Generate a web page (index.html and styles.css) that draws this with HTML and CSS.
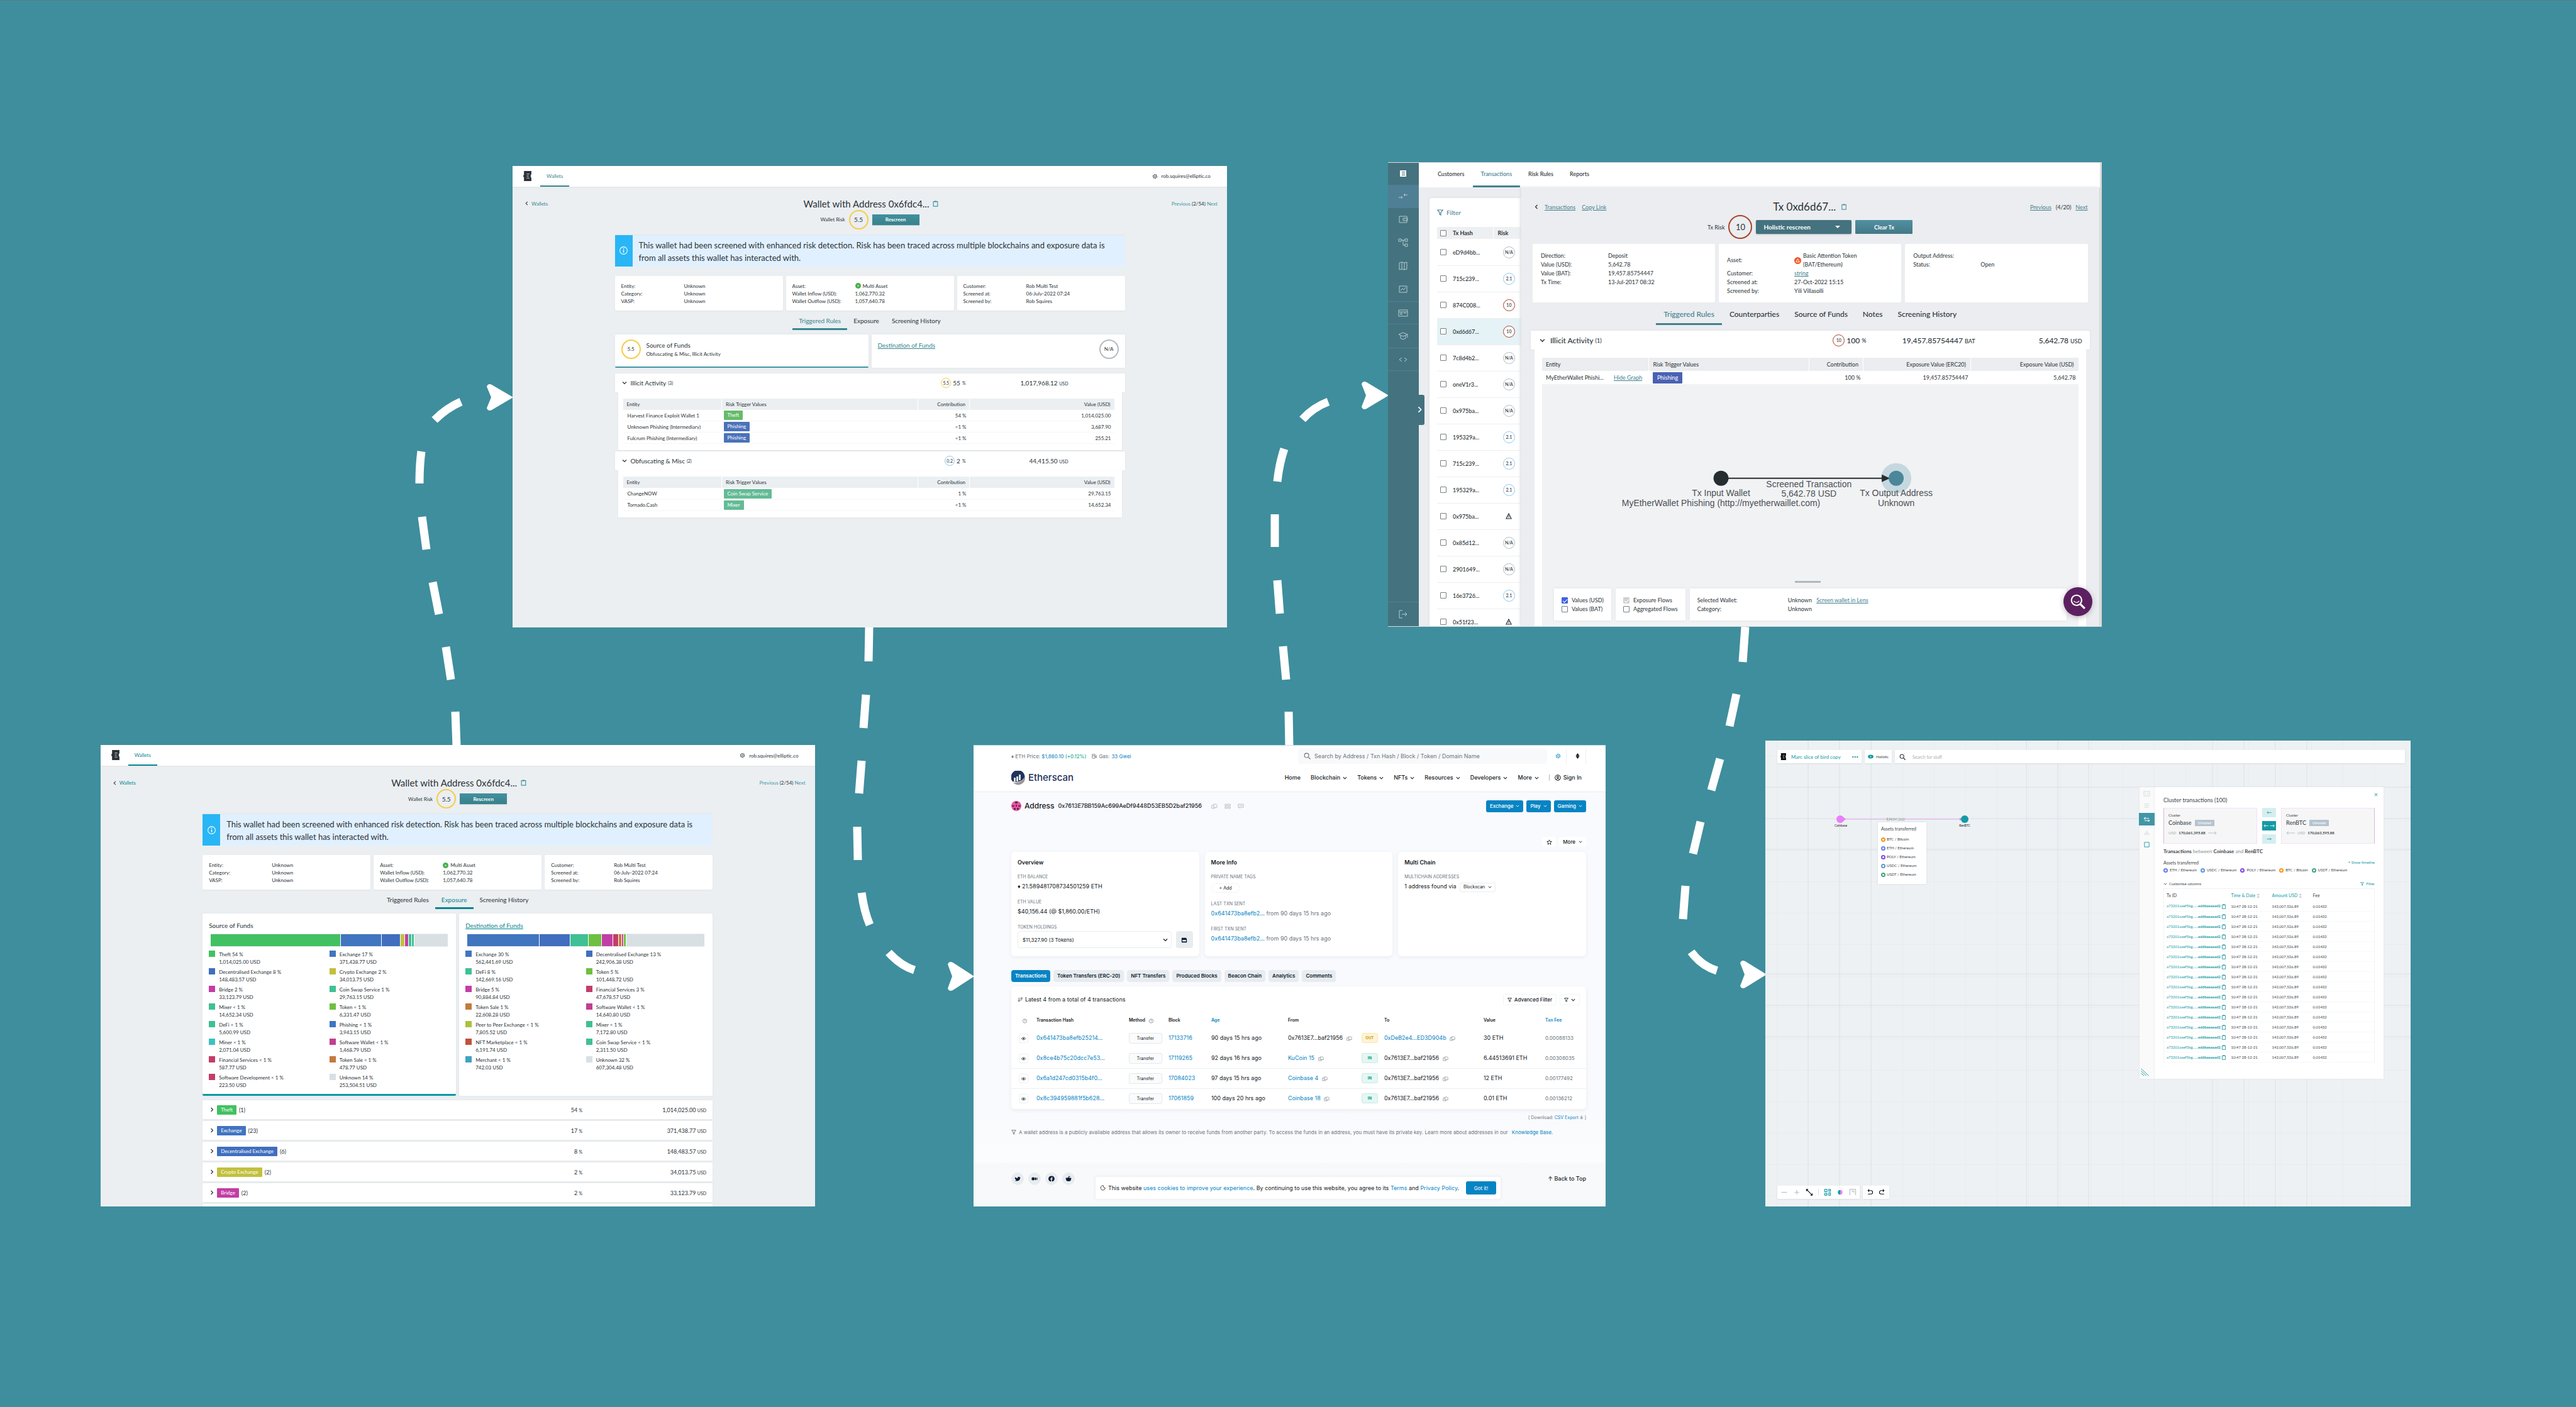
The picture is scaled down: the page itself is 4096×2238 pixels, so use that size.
FILE: index.html
```html
<!DOCTYPE html>
<html lang="en">
<head>
<meta charset="utf-8">
<title>Investigation workflow</title>
<link rel="stylesheet" href="styles.css">
</head>
<body>
<svg class="defs" aria-hidden="true">
  <symbol id="i-clip" viewBox="0 0 10 12"><path d="M1 2h8v9H1z" fill="none" stroke="currentColor" stroke-width="1.400"/><path d="M3 .5h4v2.500H3z" fill="currentColor"/></symbol>
  <symbol id="i-copy" viewBox="0 0 12 10"><path d="M4.500 1h5l1.500 1.500V7H4.500zM4.500 3H1v6h6V7" fill="none" stroke="currentColor" stroke-width="1"/></symbol>
  <symbol id="i-down" viewBox="0 0 8 8"><path d="M1 2.500l3 3 3-3" fill="none" stroke="currentColor" stroke-width="1.200"/></symbol>
  <symbol id="i-right" viewBox="0 0 8 8"><path d="M2.500 1l3 3-3 3" fill="none" stroke="currentColor" stroke-width="1.200"/></symbol>
  <symbol id="i-left" viewBox="0 0 8 8"><path d="M5.500 1l-3 3 3 3" fill="none" stroke="currentColor" stroke-width="1.200"/></symbol>
  <symbol id="i-e" viewBox="0 0 12 15"><path d="M1 0h11v5l-1 1v3l1 1v5H1V9H0V6h1z" fill="currentColor"/><path d="M5 4.500h4M5 7.500h3M5 10.500h4" stroke="#fff" stroke-width=".8"/></symbol>
  <symbol id="i-filter" viewBox="0 0 10 10"><path d="M.8 1h8.400L6 5v4L4 8V5z" fill="none" stroke="currentColor" stroke-width="1.200"/></symbol>
  <symbol id="i-search" viewBox="0 0 12 12"><circle cx="5" cy="5" r="3.800" fill="none" stroke="currentColor" stroke-width="1.200"/><path d="M8 8l3.500 3.500" stroke="currentColor" stroke-width="1.400"/></symbol>
  <symbol id="i-warn" viewBox="0 0 10 10"><path d="M5 1l4 8H1z" fill="none" stroke="currentColor" stroke-width="1.200"/><path d="M5 4v2.500M5 7.300v1" stroke="currentColor" stroke-width="1"/></symbol>
  <symbol id="i-gear" viewBox="0 0 12 12"><circle cx="6" cy="6" r="4" fill="none" stroke="currentColor" stroke-width="1.600" stroke-dasharray="3 1"/><circle cx="6" cy="6" r="1.500" fill="none" stroke="currentColor"/></symbol>
  <symbol id="i-help" viewBox="0 0 10 10"><circle cx="5" cy="5" r="4" fill="none" stroke="currentColor"/><path d="M3.800 4c0-1.600 2.500-1.600 2.500 0 0 .8-1.300.8-1.300 1.800M5 6.800v.9" fill="none" stroke="currentColor"/></symbol>
  <symbol id="i-eye" viewBox="0 0 10 10"><path d="M.8 5C3 1.800 7 1.800 9.200 5 7 8.200 3 8.200.8 5z" fill="none" stroke="currentColor"/><circle cx="5" cy="5" r="1.500" fill="currentColor"/></symbol>
</svg>

<main class="board">
  <svg class="flow" viewBox="0 0 4096 2238" aria-hidden="true">
    <g fill="none" stroke="#fff" stroke-width="13">
      <path d="M726 1187L724 1132M717 1081L709 1029M698 977L688 926M678 874L671 822M667 769Q667 740 670 718M691 668Q710 649 733 639"/>
      <path d="M1382 998L1381 1052M1377 1105L1373 1158M1370 1210L1366 1262M1363 1315L1364 1368M1370 1420Q1374 1450 1383 1471M1413 1515Q1432 1536 1454 1543"/>
      <path d="M2050 1187L2049 1132M2045 1081L2040 1028M2035 976L2031 923M2027 870L2027 818M2031 766Q2034 738 2042 714M2071 667Q2088 648 2112 639"/>
      <path d="M2775 997L2771 1053M2761 1104L2750 1155M2735 1207L2721 1257M2704 1307L2692 1358M2680 1409L2676 1462M2689 1514Q2705 1536 2730 1544"/>
    </g>
    <g fill="#fff">
      <path d="M816 632L782 652q-6 3-8-3l7-17-7-17q2-6 8-3z"/>
      <path d="M1549 1553L1515 1575q-6 3-8-3l7-19-7-19q2-6 8-3z"/>
      <path d="M2208 629L2173 650q-6 3-8-3l7-18-7-18q2-6 8-3z"/>
      <path d="M2809 1550L2775 1571q-6 3-8-3l7-18-7-18q2-6 8-3z"/>
    </g>
  </svg>

  <!-- Wallet: triggered rules -->
  <section class="shot shot-rules wallet">
    <header class="w-nav">
      <svg class="w-logo"><use href="#i-e"/></svg>
      <a class="w-navlink" href="#">Wallets</a>
      <span class="w-user"><svg><use href="#i-gear"/></svg>rob.squires@elliptic.co</span>
    </header>
    <div class="w-title">
      <span class="w-back"><svg><use href="#i-left"/></svg><a href="#">Wallets</a></span>
      <h1>Wallet with Address 0x6fdc4... <svg><use href="#i-clip"/></svg></h1>
      <span class="w-pager"><a href="#">Previous</a> (2/54) <a href="#">Next</a></span>
    </div>
    <div class="w-risk"><span>Wallet Risk</span><span class="ring yellow big">5.5</span><button class="w-btn">Rescreen</button></div>
    <div class="w-body">
      <div class="w-banner"><span class="w-info"><svg viewBox="0 0 14 14"><circle cx="7" cy="7" r="5.500" fill="none" stroke="#fff"/><path d="M7 6v4M7 3.500v1.300" stroke="#fff" stroke-width="1.400"/></svg></span><p>This wallet had been screened with enhanced risk detection. Risk has been traced across multiple blockchains and exposure data is from all assets this wallet has interacted with.</p></div>
      <div class="w-cards">
        <dl><dt>Entity:</dt><dd>Unknown</dd><dt>Category:</dt><dd>Unknown</dd><dt>VASP:</dt><dd>Unknown</dd></dl>
        <dl><dt>Asset:</dt><dd><i class="coin"></i>Multi Asset</dd><dt>Wallet Inflow (USD):</dt><dd>1,062,770.32</dd><dt>Wallet Outflow (USD):</dt><dd>1,057,640.78</dd></dl>
        <dl><dt>Customer:</dt><dd>Rob Multi Test</dd><dt>Screened at:</dt><dd>06-July-2022 07:24</dd><dt>Screened by:</dt><dd>Rob Squires</dd></dl>
      </div>
      <nav class="w-tabs"><a class="on" href="#">Triggered Rules</a><a href="#">Exposure</a><a href="#">Screening History</a></nav>
      <div class="w-funds">
        <div class="w-fund on"><span class="ring yellow big">5.5</span><div class="w-fundtext"><h2>Source of Funds</h2><p>Obfuscating &amp; Misc, Illicit Activity</p></div></div>
        <div class="w-fund"><h2><a href="#">Destination of Funds</a></h2><span class="ring grey big">N/A</span></div>
      </div>
      <div class="w-sec">
        <div class="w-sechead"><h3><svg><use href="#i-down"/></svg>Illicit Activity <small>(3)</small></h3><span class="pct"><span class="ring yellow small">5.5</span>55 <small>%</small></span><span>1,017,968.12 <small>USD</small></span></div>
        <div class="w-secbody">
          <table class="w-table">
            <thead><tr><th>Entity</th><th>Risk Trigger Values</th><th>Contribution</th><th>Value (USD)</th></tr></thead>
            <tbody>
              <tr><td>Harvest Finance Exploit Wallet 1</td><td><span class="tag green">Theft</span></td><td>54 %</td><td>1,014,025.00</td></tr>
              <tr><td>Unknown Phishing (Intermediary)</td><td><span class="tag blue">Phishing</span></td><td>&lt;1 %</td><td>3,687.90</td></tr>
              <tr><td>Fulcrum Phishing (Intermediary)</td><td><span class="tag blue">Phishing</span></td><td>&lt;1 %</td><td>255.21</td></tr>
            </tbody>
          </table>
        </div>
      </div>
      <div class="w-sec">
        <div class="w-sechead"><h3><svg><use href="#i-down"/></svg>Obfuscating &amp; Misc <small>(2)</small></h3><span class="pct"><span class="ring sky small">0.2</span>2 <small>%</small></span><span>44,415.50 <small>USD</small></span></div>
        <div class="w-secbody">
          <table class="w-table">
            <thead><tr><th>Entity</th><th>Risk Trigger Values</th><th>Contribution</th><th>Value (USD)</th></tr></thead>
            <tbody>
              <tr><td>ChangeNOW</td><td><span class="tag mint">Coin Swap Service</span></td><td>1 %</td><td>29,763.15</td></tr>
              <tr><td>Tornado.Cash</td><td><span class="tag mint">Mixer</span></td><td>&lt;1 %</td><td>14,652.34</td></tr>
            </tbody>
          </table>
        </div>
      </div>
    </div>
  </section>

  <!-- Wallet: exposure -->
  <section class="shot shot-exposure wallet teal">
    <header class="w-nav">
      <svg class="w-logo"><use href="#i-e"/></svg>
      <a class="w-navlink" href="#">Wallets</a>
      <span class="w-user"><svg><use href="#i-gear"/></svg>rob.squires@elliptic.co</span>
    </header>
    <div class="w-title">
      <span class="w-back"><svg><use href="#i-left"/></svg><a href="#">Wallets</a></span>
      <h1>Wallet with Address 0x6fdc4... <svg><use href="#i-clip"/></svg></h1>
      <span class="w-pager"><a href="#">Previous</a> (2/54) <a href="#">Next</a></span>
    </div>
    <div class="w-risk"><span>Wallet Risk</span><span class="ring yellow big">5.5</span><button class="w-btn">Rescreen</button></div>
    <div class="w-body">
      <div class="w-banner"><span class="w-info"><svg viewBox="0 0 14 14"><circle cx="7" cy="7" r="5.500" fill="none" stroke="#fff"/><path d="M7 6v4M7 3.500v1.300" stroke="#fff" stroke-width="1.400"/></svg></span><p>This wallet had been screened with enhanced risk detection. Risk has been traced across multiple blockchains and exposure data is from all assets this wallet has interacted with.</p></div>
      <div class="w-cards">
        <dl><dt>Entity:</dt><dd>Unknown</dd><dt>Category:</dt><dd>Unknown</dd><dt>VASP:</dt><dd>Unknown</dd></dl>
        <dl><dt>Asset:</dt><dd><i class="coin"></i>Multi Asset</dd><dt>Wallet Inflow (USD):</dt><dd>1,062,770.32</dd><dt>Wallet Outflow (USD):</dt><dd>1,057,640.78</dd></dl>
        <dl><dt>Customer:</dt><dd>Rob Multi Test</dd><dt>Screened at:</dt><dd>06-July-2022 07:24</dd><dt>Screened by:</dt><dd>Rob Squires</dd></dl>
      </div>
      <nav class="w-tabs"><a href="#">Triggered Rules</a><a class="on" href="#">Exposure</a><a href="#">Screening History</a></nav>
      <div class="w-expos">
        <div class="w-expo on">
          <h2>Source of Funds</h2>
          <div class="bar"><i style="flex-grow:380;background:#42c162"></i><i style="flex-grow:119;background:#4075c0"></i><i style="flex-grow:52;background:#416ebe"></i><i style="flex-grow:11;background:#c2c03d"></i><i style="flex-grow:10;background:#c23ea5"></i><i style="flex-grow:8;background:#40c094"></i><i style="flex-grow:5;background:#40c094"></i><i style="flex-grow:98;background:#d9e0e4"></i></div>
          <ul class="legend">
            <li style="--c:#42c162">Theft 54 %<br>1,014,025.00 USD</li><li style="--c:#4075c0">Exchange 17 %<br>371,438.77 USD</li>
            <li style="--c:#416ebe">Decentralised Exchange 8 %<br>148,483.57 USD</li><li style="--c:#c2c03d">Crypto Exchange 2 %<br>34,013.75 USD</li>
            <li style="--c:#c23ea5">Bridge 2 %<br>33,123.79 USD</li><li style="--c:#40c094">Coin Swap Service 1 %<br>29,763.15 USD</li>
            <li style="--c:#40c094">Mixer &lt; 1 %<br>14,652.34 USD</li><li style="--c:#6dc040">Token &lt; 1 %<br>6,331.47 USD</li>
            <li style="--c:#40c094">DeFi &lt; 1 %<br>5,600.99 USD</li><li style="--c:#4075c0">Phishing &lt; 1 %<br>3,943.15 USD</li>
            <li style="--c:#40c0c0">Miner &lt; 1 %<br>2,071.04 USD</li><li style="--c:#c23e90">Software Wallet &lt; 1 %<br>1,468.79 USD</li>
            <li style="--c:#c23e68">Financial Services &lt; 1 %<br>587.77 USD</li><li style="--c:#c27a3e">Token Sale &lt; 1 %<br>478.77 USD</li>
            <li style="--c:#c23e68">Software Development &lt; 1 %<br>223.50 USD</li><li style="--c:#d9e0e4">Unknown 14 %<br>253,504.51 USD</li>
          </ul>
        </div>
        <div class="w-expo">
          <h2><a href="#">Destination of Funds</a></h2>
          <div class="bar"><i style="flex-grow:213;background:#4075c0"></i><i style="flex-grow:90;background:#416ebe"></i><i style="flex-grow:52;background:#40c094"></i><i style="flex-grow:36;background:#6dc040"></i><i style="flex-grow:32;background:#c23ea5"></i><i style="flex-grow:16;background:#c23e68"></i><i style="flex-grow:7;background:#c27a3e"></i><i style="flex-grow:4;background:#c23e90"></i><i style="flex-grow:5;background:#6dc040"></i><i style="flex-grow:232;background:#d9e0e4"></i></div>
          <ul class="legend">
            <li style="--c:#4075c0">Exchange 30 %<br>562,441.69 USD</li><li style="--c:#416ebe">Decentralised Exchange 13 %<br>242,906.38 USD</li>
            <li style="--c:#40c094">DeFi 8 %<br>142,669.16 USD</li><li style="--c:#6dc040">Token 5 %<br>101,448.72 USD</li>
            <li style="--c:#c23ea5">Bridge 5 %<br>90,884.84 USD</li><li style="--c:#c23e68">Financial Services 3 %<br>47,678.57 USD</li>
            <li style="--c:#c27a3e">Token Sale 1 %<br>22,608.28 USD</li><li style="--c:#c23e90">Software Wallet &lt; 1 %<br>14,640.80 USD</li>
            <li style="--c:#adc03e">Peer to Peer Exchange &lt; 1 %<br>7,805.52 USD</li><li style="--c:#40c094">Mixer &lt; 1 %<br>7,172.80 USD</li>
            <li style="--c:#c2503e">NFT Marketplace &lt; 1 %<br>6,191.74 USD</li><li style="--c:#40c094">Coin Swap Service &lt; 1 %<br>2,311.50 USD</li>
            <li style="--c:#40a2c0">Merchant &lt; 1 %<br>742.03 USD</li><li style="--c:#d9e0e4">Unknown 32 %<br>607,304.48 USD</li>
          </ul>
        </div>
      </div>
      <div class="w-rows">
        <div class="w-row"><h3><svg><use href="#i-right"/></svg><span class="tag" style="background:#42c162">Theft</span>(1)</h3><span>54 <small>%</small></span><span>1,014,025.00 <small>USD</small></span></div>
        <div class="w-row"><h3><svg><use href="#i-right"/></svg><span class="tag" style="background:#4075c0">Exchange</span>(23)</h3><span>17 <small>%</small></span><span>371,438.77 <small>USD</small></span></div>
        <div class="w-row"><h3><svg><use href="#i-right"/></svg><span class="tag" style="background:#416ebe">Decentralised Exchange</span>(6)</h3><span>8 <small>%</small></span><span>148,483.57 <small>USD</small></span></div>
        <div class="w-row"><h3><svg><use href="#i-right"/></svg><span class="tag" style="background:#c2c03d">Crypto Exchange</span>(2)</h3><span>2 <small>%</small></span><span>34,013.75 <small>USD</small></span></div>
        <div class="w-row"><h3><svg><use href="#i-right"/></svg><span class="tag" style="background:#c23ea5">Bridge</span>(2)</h3><span>2 <small>%</small></span><span>33,123.79 <small>USD</small></span></div>
        <div class="w-row"></div>
      </div>
    </div>
  </section>

  <!-- Transaction screening -->
  <section class="shot shot-tx">
    <aside class="t-side">
      <a class="t-logo" href="#" aria-label="Home"><svg viewBox="0 0 12 12"><path d="M1 1h10v10H1z" fill="#fff"/><path d="M4 3.500h5M4 6h5M4 8.500h5" stroke="#44727f"/></svg></a>
      <a class="on" href="#" aria-label="Transactions"><svg viewBox="0 0 16 16"><path d="M1 10h5M5 8l2 2-2 2M15 6h-5M11 4L9 6l2 2"/></svg></a>
      <a href="#" aria-label="Wallets"><svg viewBox="0 0 16 16"><path d="M2 3h12v10H2zM8 6h7v4H8zM10 8h1"/></svg></a>
      <a href="#" aria-label="Flows"><svg viewBox="0 0 16 16"><path d="M1 2h4v4H1zM11 2h4v4h-4zM11 10h4v4h-4zM5 4h6M8 4v8h3"/></svg></a>
      <a href="#" aria-label="Map"><svg viewBox="0 0 16 16"><path d="M2 3l4-1 4 1 4-1v11l-4 1-4-1-4 1zM6 2v11M10 3v11"/></svg></a>
      <a href="#" aria-label="Reports"><svg viewBox="0 0 16 16"><path d="M2 3h12v10H2zM4 10l3-3 2 2 3-4"/></svg></a>
      <a class="rule" href="#" aria-label="Cases"><svg viewBox="0 0 16 16"><path d="M1 3h14v10H1zM1 6h14M3 8h4M9 8h4M3 10h4"/></svg></a>
      <a href="#" aria-label="Learning"><svg viewBox="0 0 16 16"><path d="M1 6l7-3 7 3-7 3zM4 8v4l4 2 4-2V8M15 6v5"/></svg></a>
      <a class="rule" href="#" aria-label="API"><svg viewBox="0 0 16 16"><path d="M6 5L2 8l4 3M10 5l4 3-4 3"/></svg></a>
      <a class="t-out rule" href="#" aria-label="Log out"><svg viewBox="0 0 16 16"><path d="M7 2H2v12h5M6 8h8M11 5l3 3-3 3"/></svg></a>
      <button class="t-toggle" aria-label="Expand menu"><svg><use href="#i-right"/></svg></button>
    </aside>
    <div class="t-page">
      <nav class="t-nav"><a href="#">Customers</a><a class="on" href="#">Transactions</a><a href="#">Risk Rules</a><a href="#">Reports</a></nav>
      <div class="t-cols">
        <div class="t-list">
          <button class="t-filter"><svg><use href="#i-filter"/></svg>Filter</button>
          <table>
            <thead><tr><th><input type="checkbox" aria-label="Select all"></th><th>Tx Hash</th><th>Risk</th></tr></thead>
            <tbody>
              <tr><td><input type="checkbox" aria-label="Select row 1"></td><td>eD9d4bb...</td><td><span class="ring grey mid">N/A</span></td></tr>
              <tr><td><input type="checkbox" aria-label="Select row 2"></td><td>715c239...</td><td><span class="ring sky mid">2.1</span></td></tr>
              <tr><td><input type="checkbox" aria-label="Select row 3"></td><td>874C008...</td><td><span class="ring red mid">10</span></td></tr>
              <tr class="on"><td><input type="checkbox" aria-label="Select row 4"></td><td>0xd6d67...</td><td><span class="ring red mid">10</span></td></tr>
              <tr><td><input type="checkbox" aria-label="Select row 5"></td><td>7c8d4b2...</td><td><span class="ring grey mid">N/A</span></td></tr>
              <tr><td><input type="checkbox" aria-label="Select row 6"></td><td>oneV1r3...</td><td><span class="ring grey mid">N/A</span></td></tr>
              <tr><td><input type="checkbox" aria-label="Select row 7"></td><td>0x975ba...</td><td><span class="ring grey mid">N/A</span></td></tr>
              <tr><td><input type="checkbox" aria-label="Select row 8"></td><td>195329a...</td><td><span class="ring sky mid">2.1</span></td></tr>
              <tr><td><input type="checkbox" aria-label="Select row 9"></td><td>715c239...</td><td><span class="ring sky mid">2.1</span></td></tr>
              <tr><td><input type="checkbox" aria-label="Select row 10"></td><td>195329a...</td><td><span class="ring sky mid">2.1</span></td></tr>
              <tr><td><input type="checkbox" aria-label="Select row 11"></td><td>0x975ba...</td><td><svg class="warn"><use href="#i-warn"/></svg></td></tr>
              <tr><td><input type="checkbox" aria-label="Select row 12"></td><td>0x85d12...</td><td><span class="ring grey mid">N/A</span></td></tr>
              <tr><td><input type="checkbox" aria-label="Select row 13"></td><td>2901649...</td><td><span class="ring grey mid">N/A</span></td></tr>
              <tr><td><input type="checkbox" aria-label="Select row 14"></td><td>16e3726...</td><td><span class="ring sky mid">2.1</span></td></tr>
              <tr><td><input type="checkbox" aria-label="Select row 15"></td><td>0x51f23...</td><td><svg class="warn"><use href="#i-warn"/></svg></td></tr>
            </tbody>
          </table>
        </div>
        <div class="t-main">
          <div class="t-title">
            <span class="t-crumbs"><svg><use href="#i-left"/></svg><a href="#">Transactions</a><a href="#">Copy Link</a></span>
            <h1>Tx 0xd6d67... <svg><use href="#i-clip"/></svg></h1>
            <span class="t-pager"><a href="#">Previous</a><span>(4/20)</span><a href="#">Next</a></span>
          </div>
          <div class="t-risk"><label for="rescreen">Tx Risk</label><span class="ring red huge">10</span><span class="t-select"><select id="rescreen"><option>Holistic rescreen</option></select></span><button>Clear Tx</button></div>
          <div class="t-cards">
            <dl><dt>Direction:</dt><dd>Deposit</dd><dt>Value (USD):</dt><dd>5,642.78</dd><dt>Value (BAT):</dt><dd>19,457.85754447</dd><dt>Tx Time:</dt><dd>13-Jul-2017 08:32</dd></dl>
            <dl><dt class="two">Asset:</dt><dd class="bat"><svg viewBox="0 0 12 12"><circle cx="6" cy="6" r="6" fill="#f0582d"/><path d="M6 3l3 5.500H3z" fill="none" stroke="#fff"/></svg><span>Basic Attention Token<br>(BAT/Ethereum)</span></dd><dt>Customer:</dt><dd><a href="#">string</a></dd><dt>Screened at:</dt><dd>27-Oct-2022 15:15</dd><dt>Screened by:</dt><dd>Yili Villasolli</dd></dl>
            <dl><dt>Output Address:</dt><dd></dd><dt>Status:</dt><dd>Open</dd></dl>
          </div>
          <nav class="t-tabs"><a class="on" href="#">Triggered Rules</a><a href="#">Counterparties</a><a href="#">Source of Funds</a><a href="#">Notes</a><a href="#">Screening History</a></nav>
          <div class="t-sechead"><h2><svg><use href="#i-down"/></svg>Illicit Activity <small>(1)</small></h2><span class="pct"><span class="ring red mid">10</span>100 <small>%</small></span><span>19,457.85754447 <small>BAT</small></span><span>5,642.78 <small>USD</small></span></div>
          <div class="t-secbody">
            <table>
              <thead><tr><th>Entity</th><th>Risk Trigger Values</th><th>Contribution</th><th>Exposure Value (ERC20)</th><th>Exposure Value (USD)</th></tr></thead>
              <tbody><tr><td><span class="t-ent">MyEtherWallet Phishi...</span><a href="#">Hide Graph</a></td><td><span class="t-tag">Phishing</span></td><td>100 %</td><td>19,457.85754447</td><td>5,642.78</td></tr></tbody>
            </table>
            <div class="t-graph">
              <svg viewBox="0 0 854 384" preserveAspectRatio="xMidYMin meet">
                <circle cx="564" cy="150" r="24" fill="#c6d8df"/>
                <path d="M285 150H545" stroke="#262d31" stroke-width="2"/>
                <path d="M541 144l13 6-13 6z" fill="#262d31"/>
                <circle cx="285" cy="150" r="12" fill="#262d31"/><circle cx="564" cy="150" r="12" fill="#4c8699"/>
                <g class="t-gtext" text-anchor="middle"><text x="285" y="178">Tx Input Wallet</text><text x="285" y="194">MyEtherWallet Phishing (http://myetherwaillet.com)</text><text x="425" y="164">Screened Transaction</text><text x="425" y="179">5,642.78 USD</text><text x="564" y="178">Tx Output Address</text><text x="564" y="194">Unknown</text></g>
              </svg>
              <div class="t-dock">
                <span class="t-grip"></span>
                <div class="t-opts"><label><input type="checkbox" checked>Values (USD)</label><label><input type="checkbox">Values (BAT)</label></div>
                <div class="t-opts"><label><input type="checkbox" checked disabled>Exposure Flows</label><label><input type="checkbox">Aggregated Flows</label></div>
                <dl><dt>Selected Wallet:</dt><dd>Unknown <a href="#">Screen wallet in Lens</a></dd><dt>Category:</dt><dd>Unknown</dd></dl>
              </div>
            </div>
          </div>
        </div>
      </div>
    </div>
    <button class="t-fab" aria-label="Search"><svg viewBox="0 0 24 24"><circle cx="10" cy="10" r="7.500" fill="none" stroke="#fff" stroke-width="2"/><path d="M6 11c2 3 6 3 8 0" fill="none" stroke="#fff"/><path d="M15.500 15.500L22 22" stroke="#fff" stroke-width="3"/></svg></button>
  </section>

  <!-- Etherscan -->
  <section class="shot shot-scan">
    <header class="s-head">
      <div class="s-top">
        <span class="s-price"><span>♦ ETH Price:</span> <a href="#">$1,860.10 <b>(+0.12%)</b></a></span><span class="s-gas"><svg viewBox="0 0 10 10"><path d="M1 9V1h5v8zM1 4h5M6 5h2v3h1V3L7.500 1.500" fill="none" stroke="currentColor"/></svg>Gas: <a href="#">33 Gwei</a></span>
        <span class="s-search"><svg><use href="#i-search"/></svg><input type="search" aria-label="Search" placeholder="Search by Address / Txn Hash / Block / Token / Domain Name"></span>
        <button class="s-sq sun" aria-label="Theme"><svg><use href="#i-gear"/></svg></button><button class="s-sq" aria-label="Network"><svg viewBox="0 0 12 12"><path d="M6 0l4 6-4 6-4-6z" fill="#111"/><path d="M2 6h8" stroke="#fff" stroke-width=".6"/></svg></button>
      </div>
      <div class="s-bar">
        <a class="s-brand" href="#"><svg viewBox="0 0 22 23"><path d="M2 17A11 11 0 1 1 21.500 9.500C19 15 14 17 9 18" fill="#21325b"/><path d="M3 19C11 20 19 16 21.800 9.500A11 11 0 0 1 5 20.500z" fill="#979695"/><path d="M5.500 11v6M9.500 9v8M13.500 6v9" stroke="#fff" stroke-width="2.500"/></svg>Etherscan</a>
        <nav><a href="#">Home</a><a href="#">Blockchain<svg><use href="#i-down"/></svg></a><a href="#">Tokens<svg><use href="#i-down"/></svg></a><a href="#">NFTs<svg><use href="#i-down"/></svg></a><a href="#">Resources<svg><use href="#i-down"/></svg></a><a href="#">Developers<svg><use href="#i-down"/></svg></a><a href="#">More<svg><use href="#i-down"/></svg></a><span class="s-sep"></span><a class="s-sign" href="#"><svg viewBox="0 0 10 10"><circle cx="5" cy="5" r="4.300" fill="none" stroke="#111"/><circle cx="5" cy="4" r="1.500" fill="none" stroke="#111"/><path d="M2.500 8c1-2 4-2 5 0" fill="none" stroke="#111"/></svg>Sign In</a></nav>
      </div>
    </header>
    <div class="s-page">
      <div class="s-addr"><svg class="s-ident" viewBox="0 0 16 16"><circle cx="8" cy="8" r="8" fill="#f2529d"/><path d="M1 7h4v2H1zM11 7h4v2h-4zM6 1h4v3H6zM7 6h2v3H7zM4 11h3v3H4zM9 11h3v3H9z" fill="#4a3560"/></svg><h1>Address</h1><span class="s-hash">0x7613E7BB159Ac699AeDf9448D53EB5D2baf21956</span><span class="s-acts"><svg><use href="#i-copy"/></svg><svg viewBox="0 0 12 10"><path d="M1 1h4v3H1zM7 1h4v3H7zM1 6h4v3H1zM7 6h4v3H7z" fill="none" stroke="currentColor"/></svg><svg viewBox="0 0 12 10"><path d="M1 1h10v6H6L4 9V7H1zM3 4h6" fill="none" stroke="currentColor"/></svg></span>
        <span class="s-btns"><button>Exchange<svg><use href="#i-down"/></svg></button><button>Play<svg><use href="#i-down"/></svg></button><button>Gaming<svg><use href="#i-down"/></svg></button></span></div>
      <div class="s-more"><button aria-label="Favourite"><svg class="s-star" viewBox="0 0 10 10"><path d="M5 1l1.200 2.800 3 .2-2.300 2 .8 3L5 7.400 2.300 9l.8-3L.8 4l3-.2z" fill="none" stroke="currentColor"/></svg></button><button>More<svg><use href="#i-down"/></svg></button></div>
      <div class="s-cards">
        <div class="s-card"><h2>Overview</h2><h3>ETH BALANCE</h3><p>♦ 21.589481708734501259 ETH</p><h3>ETH VALUE</h3><p>$40,156.44 (@ $1,860.00/ETH)</p><h3><label for="hold">TOKEN HOLDINGS</label></h3><div class="s-hold"><span><select id="hold"><option>$11,327.90 (3 Tokens)</option></select><svg><use href="#i-down"/></svg></span><button aria-label="Holdings"><svg viewBox="0 0 12 12"><path d="M1 3c0-1 1-1 1-1h8v2h1v7H2c-1 0-1-1-1-1z" fill="#081d35"/><path d="M2.500 6h7v3h-7z" fill="#e9ecef"/></svg></button></div></div>
        <div class="s-card"><h2>More Info</h2><h3>PRIVATE NAME TAGS</h3><p class="s-taglist"><button>+ Add</button></p><h3>LAST TXN SENT</h3><p><a href="#">0x641473ba8efb2...</a> <em>from 90 days 15 hrs ago</em></p><h3>FIRST TXN SENT</h3><p><a href="#">0x641473ba8efb2...</a> <em>from 90 days 15 hrs ago</em></p></div>
        <div class="s-card"><h2>Multi Chain</h2><h3>MULTICHAIN ADDRESSES</h3><p>1 address found via <button>Blockscan<svg><use href="#i-down"/></svg></button></p></div>
      </div>
      <nav class="s-tabs"><a class="on" href="#">Transactions</a><a href="#">Token Transfers (ERC-20)</a><a href="#">NFT Transfers</a><a href="#">Produced Blocks</a><a href="#">Beacon Chain</a><a href="#">Analytics</a><a href="#">Comments</a></nav>
      <div class="s-list">
        <div class="s-listhead"><p><svg class="s-sort" viewBox="0 0 12 10"><path d="M3 1v8M1 7l2 2 2-2M6 1.500h5M6 4h4M6 6.500h2" fill="none" stroke="currentColor"/></svg>Latest 4 from a total of 4 transactions</p><span><button><svg><use href="#i-filter"/></svg>Advanced Filter</button><button aria-label="Filter"><svg><use href="#i-filter"/></svg><svg><use href="#i-down"/></svg></button></span></div>
        <table>
          <colgroup><col style="width:40px"><col style="width:147px"><col style="width:63px"><col style="width:68px"><col style="width:122px"><col style="width:117px"><col style="width:36px"><col style="width:158px"><col style="width:98px"><col></colgroup>
          <thead><tr><th><svg><use href="#i-help"/></svg></th><th>Transaction Hash</th><th>Method <svg><use href="#i-help"/></svg></th><th>Block</th><th><a href="#">Age</a></th><th>From</th><th></th><th>To</th><th>Value</th><th><a href="#">Txn Fee</a></th></tr></thead>
          <tbody>
            <tr><td><button aria-label="Preview"><svg><use href="#i-eye"/></svg></button></td><td><a href="#">0x641473ba8efb25214...</a></td><td><span class="s-pill">Transfer</span></td><td><a href="#">17133716</a></td><td>90 days 15 hrs ago</td><td>0x7613E7...baf21956 <svg><use href="#i-copy"/></svg></td><td><b class="out">OUT</b></td><td><a href="#">0xDeB2e4...ED3D904b</a> <svg><use href="#i-copy"/></svg></td><td>30 ETH</td><td>0.00088133</td></tr>
            <tr><td><button aria-label="Preview"><svg><use href="#i-eye"/></svg></button></td><td><a href="#">0x8ce4b75c20dcc7e53...</a></td><td><span class="s-pill">Transfer</span></td><td><a href="#">17119265</a></td><td>92 days 16 hrs ago</td><td><a href="#">KuCoin 15</a> <svg><use href="#i-copy"/></svg></td><td><b class="in">IN</b></td><td>0x7613E7...baf21956 <svg><use href="#i-copy"/></svg></td><td>6.44513691 ETH</td><td>0.00308035</td></tr>
            <tr><td><button aria-label="Preview"><svg><use href="#i-eye"/></svg></button></td><td><a href="#">0x6a1d247cd0315b4f0...</a></td><td><span class="s-pill">Transfer</span></td><td><a href="#">17084023</a></td><td>97 days 15 hrs ago</td><td><a href="#">Coinbase 4</a> <svg><use href="#i-copy"/></svg></td><td><b class="in">IN</b></td><td>0x7613E7...baf21956 <svg><use href="#i-copy"/></svg></td><td>12 ETH</td><td>0.00177492</td></tr>
            <tr><td><button aria-label="Preview"><svg><use href="#i-eye"/></svg></button></td><td><a href="#">0x8c394959881f5b628...</a></td><td><span class="s-pill">Transfer</span></td><td><a href="#">17061859</a></td><td>100 days 20 hrs ago</td><td><a href="#">Coinbase 18</a> <svg><use href="#i-copy"/></svg></td><td><b class="in">IN</b></td><td>0x7613E7...baf21956 <svg><use href="#i-copy"/></svg></td><td>0.01 ETH</td><td>0.00136212</td></tr>
          </tbody>
        </table>
      </div>
      <p class="s-down">[ Download: <a href="#">CSV Export</a> ⤓ ]</p>
      <p class="s-note"><svg><use href="#i-filter"/></svg>A wallet address is a publicly available address that allows its owner to receive funds from another party. To access the funds in an address, you must have its private key. Learn more about addresses in our <a href="#">Knowledge Base.</a></p>
    </div>
    <footer class="s-foot">
      <a class="s-soc" href="#" aria-label="Twitter"><svg viewBox="0 0 10 10"><path d="M1 2c1 1.500 2.500 2 4 2 0-2.500 2.500-3 3.500-1.500L9.500 3 9 4c0 4-5 5.500-8.500 4 1 0 2-.5 2.500-1C1 6 .5 4 1 2z"/></svg></a><a class="s-soc" href="#" aria-label="Medium"><svg viewBox="0 0 10 10"><circle cx="2.800" cy="5" r="2.500"/><ellipse cx="6.800" cy="5" rx="1.200" ry="2.300"/><path d="M8.800 3h.8v4h-.8z"/></svg></a><a class="s-soc" href="#" aria-label="Facebook"><svg viewBox="0 0 10 10"><path d="M5 .5a4.500 4.500 0 0 0-.8 9V6H3V4.800h1.200C4 3 5 2.300 6.800 2.600v1C5.800 3.500 5.500 4 5.600 4.800h1.200L6.600 6h-1v3.500A4.500 4.500 0 0 0 5 .5z"/></svg></a><a class="s-soc" href="#" aria-label="Reddit"><svg viewBox="0 0 10 10"><ellipse cx="5" cy="6" rx="4" ry="3"/><circle cx="1.500" cy="4.500" r="1"/><circle cx="8.500" cy="4.500" r="1"/><path d="M5 3l.5-2 2 .5" fill="none" stroke="#081d35"/></svg></a>
      <a class="s-totop" href="#">↑ Back to Top</a>
    </footer>
    <div class="s-cookie"><svg viewBox="0 0 10 10"><path d="M6 1a4 4 0 1 0 3.200 4C7 5 6 4 6 1z" fill="none" stroke="#333"/></svg><p>This website <a href="#">uses cookies to improve your experience</a>. By continuing to use this website, you agree to its <a href="#">Terms</a> and <a href="#">Privacy Policy</a>.</p><button>Got it!</button></div>
  </section>

  <!-- Investigator canvas -->
  <section class="shot shot-graph">
    <svg class="g-lines" viewBox="0 0 1026 741" preserveAspectRatio="xMinYMin slice" aria-hidden="true"><path d="M68 0V741M118 0V741M168 0V741M415 0V741M465 0V741M514 0V741M711 0V741M761 0V741M811 0V741M861 0V741M0 74H1026M0 124H1026M0 173H1026M0 371H1026M0 421H1026M0 471H1026" stroke="#dde1e4" stroke-width="1"/></svg>
    <header class="g-top">
      <div class="g-box g-name"><svg><use href="#i-e"/></svg><a href="#">Marc slice of bird copy</a><button aria-label="Menu">•••</button></div>
      <div class="g-box g-mode"><svg viewBox="0 0 10 8"><ellipse cx="5" cy="4" rx="5" ry="3.500" fill="#159aa5"/><circle cx="5" cy="4" r="1" fill="#fff"/></svg>Holistic</div>
      <div class="g-box g-search"><svg><use href="#i-search"/></svg><input type="search" aria-label="Search" placeholder="Search for stuff"></div>
    </header>
    <svg class="g-net" viewBox="0 0 260 40">
      <path d="M12 18H204" stroke="#e6a4f1"/><path d="M16 14l5 4-5 4z" fill="#ea7ffa"/><path d="M202 16l5 2-5 2z" fill="#c08ae0"/>
      <path d="M86 18h28" stroke="#edf1f4" stroke-width="5"/>
      <circle cx="12" cy="18" r="6" fill="#ea7ffa"/><circle cx="210" cy="18" r="6" fill="#159aa5"/>
      <g text-anchor="middle"><text x="100" y="20" class="dim">$340M (100)</text><text x="13" y="30">Coinbase</text><text x="210" y="30">RenBTC</text></g>
    </svg>
    <div class="g-tip"><h2>Assets transferred</h2><ul><li style="--c:#f7931a">BTC / Bitcoin</li><li style="--c:#627eea">ETH / Ethereum</li><li style="--c:#8247e5">POLY / Ethereum</li><li style="--c:#5b97d8">USDC / Ethereum</li><li style="--c:#3fa583">USDT / Ethereum</li></ul></div>
    <div class="g-side">
      <div class="g-rail">
        <svg viewBox="0 0 12 12" class="dim"><path d="M1 2h10v8H1zM4 4v4M8 4v4"/></svg>
        <svg viewBox="0 0 12 12" class="dim"><path d="M2 3h8M2 6h8M2 9h8"/></svg>
        <button aria-label="Transactions"><svg viewBox="0 0 12 12"><path d="M1 4h9M4 2L1 4l3 2M11 8H2M8 6l3 2-3 2"/></svg></button>
        <svg viewBox="0 0 12 12" class="dim"><path d="M2 9l4-6 4 6zM4 7h4"/></svg>
        <svg viewBox="0 0 12 12"><path d="M2 2h8v8H2z"/></svg>
        <svg class="g-hatch" viewBox="0 0 14 14"><path d="M0 1l13 12M0 5l9 8M0 9l5 4"/></svg>
      </div>
      <div class="g-panel">
        <button class="g-x" aria-label="Close"><svg viewBox="0 0 8 8"><path d="M1 1l6 6M7 1L1 7" stroke="#159aa5" stroke-width="1.200"/></svg></button>
        <h2>Cluster transactions (100)</h2>
        <div class="g-pair">
          <div class="g-card"><small>Cluster</small><p><b>Coinbase</b><span>Unhosted</span></p><p class="amt"><i>USD</i> 170,061,395.88<svg viewBox="0 0 14 6"><path d="M0 3h13M10 .5L13 3l-3 2.500"/></svg></p></div>
          <div class="g-dir"><button aria-label="Incoming">←</button><button class="on" aria-label="Both">← →</button><button aria-label="Outgoing">→</button></div>
          <div class="g-card"><small>Cluster</small><p><b>RenBTC</b><span>Unhosted</span></p><p class="amt"><svg viewBox="0 0 14 6"><path d="M14 3H1M4 .5L1 3l3 2.500"/></svg><i>USD</i> 170,063,595.88</p></div>
        </div>
        <p class="g-between"><b>Transactions</b> between <b>Coinbase</b> and <b>RenBTC</b></p>
        <div class="g-line"><h3>Assets transferred</h3><a href="#">+ Show timeline</a></div>
        <ul class="g-assets"><li style="--c:#627eea">ETH / Ethereum</li><li style="--c:#5b97d8">USDC / Ethereum</li><li style="--c:#8247e5">POLY / Ethereum</li><li style="--c:#f7931a">BTC / Bitcoin</li><li style="--c:#3fa583">USDT / Ethereum</li></ul>
        <div class="g-line g-cust"><span><svg><use href="#i-down"/></svg>Customise columns</span><a href="#"><svg><use href="#i-filter"/></svg>Filter</a></div>
        <table>
          <thead><tr><th>Tx ID</th><th class="t">Time &amp; Date <i>↕</i></th><th class="t">Amount USD <i>↕</i></th><th>Fee</th></tr></thead>
          <tbody>
            <tr><td><a href="#">a73201aaef5bg......<b>ed6baeaaad2</b></a> <svg><use href="#i-clip"/></svg></td><td>10:47 28-12-21</td><td>142,007,526.89</td><td>0.01432</td></tr>
            <tr><td><a href="#">a73201aaef5bg......<b>ed6baeaaad2</b></a> <svg><use href="#i-clip"/></svg></td><td>10:47 28-12-21</td><td>142,007,526.89</td><td>0.01432</td></tr>
            <tr><td><a href="#">a73201aaef5bg......<b>ed6baeaaad2</b></a> <svg><use href="#i-clip"/></svg></td><td>10:47 28-12-21</td><td>142,007,526.89</td><td>0.01432</td></tr>
            <tr><td><a href="#">a73201aaef5bg......<b>ed6baeaaad2</b></a> <svg><use href="#i-clip"/></svg></td><td>10:47 28-12-21</td><td>142,007,526.89</td><td>0.01432</td></tr>
            <tr><td><a href="#">a73201aaef5bg......<b>ed6baeaaad2</b></a> <svg><use href="#i-clip"/></svg></td><td>10:47 28-12-21</td><td>142,007,526.89</td><td>0.01432</td></tr>
            <tr><td><a href="#">a73201aaef5bg......<b>ed6baeaaad2</b></a> <svg><use href="#i-clip"/></svg></td><td>10:47 28-12-21</td><td>142,007,526.89</td><td>0.01432</td></tr>
            <tr><td><a href="#">a73201aaef5bg......<b>ed6baeaaad2</b></a> <svg><use href="#i-clip"/></svg></td><td>10:47 28-12-21</td><td>142,007,526.89</td><td>0.01432</td></tr>
            <tr><td><a href="#">a73201aaef5bg......<b>ed6baeaaad2</b></a> <svg><use href="#i-clip"/></svg></td><td>10:47 28-12-21</td><td>142,007,526.89</td><td>0.01432</td></tr>
            <tr><td><a href="#">a73201aaef5bg......<b>ed6baeaaad2</b></a> <svg><use href="#i-clip"/></svg></td><td>10:47 28-12-21</td><td>142,007,526.89</td><td>0.01432</td></tr>
            <tr><td><a href="#">a73201aaef5bg......<b>ed6baeaaad2</b></a> <svg><use href="#i-clip"/></svg></td><td>10:47 28-12-21</td><td>142,007,526.89</td><td>0.01432</td></tr>
            <tr><td><a href="#">a73201aaef5bg......<b>ed6baeaaad2</b></a> <svg><use href="#i-clip"/></svg></td><td>10:47 28-12-21</td><td>142,007,526.89</td><td>0.01432</td></tr>
            <tr><td><a href="#">a73201aaef5bg......<b>ed6baeaaad2</b></a> <svg><use href="#i-clip"/></svg></td><td>10:47 28-12-21</td><td>142,007,526.89</td><td>0.01432</td></tr>
            <tr><td><a href="#">a73201aaef5bg......<b>ed6baeaaad2</b></a> <svg><use href="#i-clip"/></svg></td><td>10:47 28-12-21</td><td>142,007,526.89</td><td>0.01432</td></tr>
            <tr><td><a href="#">a73201aaef5bg......<b>ed6baeaaad2</b></a> <svg><use href="#i-clip"/></svg></td><td>10:47 28-12-21</td><td>142,007,526.89</td><td>0.01432</td></tr>
            <tr><td><a href="#">a73201aaef5bg......<b>ed6baeaaad2</b></a> <svg><use href="#i-clip"/></svg></td><td>10:47 28-12-21</td><td>142,007,526.89</td><td>0.01432</td></tr>
            <tr><td><a href="#">a73201aaef5bg......<b>ed6baeaaad2</b></a> <svg><use href="#i-clip"/></svg></td><td>10:47 28-12-21</td><td>142,007,526.89</td><td>0.01432</td></tr>
          </tbody>
        </table>
      </div>
    </div>
    <div class="g-tools">
      <div class="g-box"><svg viewBox="0 0 12 12" class="dim"><path d="M1 6h10"/></svg><svg viewBox="0 0 12 12" class="dim"><path d="M2 6h8M6 2v8"/></svg><svg viewBox="0 0 12 12"><path d="M1 1l10 10M1 4V1h3M11 8v3H8"/></svg><i></i><svg viewBox="0 0 12 12" class="tl"><path d="M1 1h4v4H1zM8 1h3v3H8zM8 7h3v4H8zM1 8h4v3H1z"/></svg><svg viewBox="0 0 12 12" class="pie"><path d="M6 2a4 4 0 0 0 0 8z" fill="#159aa5"/><path d="M6 2a4 4 0 0 1 0 8z" fill="#ea7ffa"/></svg><svg viewBox="0 0 12 12" class="dim"><path d="M1 11V1h10v10M4 4h4v3"/></svg></div>
      <div class="g-box"><svg viewBox="0 0 12 12"><path d="M3 3h5a3 3 0 0 1 0 6H3M5 1L3 3l2 2"/></svg><svg viewBox="0 0 12 12"><path d="M9 3H4a3 3 0 0 0 0 6h5M7 1l2 2-2 2"/></svg></div>
    </div>
  </section>
</main>
</body>
</html>
```
FILE: styles.css
```css
* { box-sizing: border-box; }
body { margin: 0; background: #3f8e9d; font-family: Lato, "Liberation Sans", sans-serif; color: #2b3338; }
h1, h2, h3, p, dl, dd, ul { margin: 0; padding: 0; font-weight: 400; }
ul { list-style: none; }
a { color: inherit; text-decoration: none; }
button, input, select { font: inherit; color: inherit; border: 0; padding: 0; margin: 0; background: none; }
table { border-collapse: collapse; width: 100%; }
th { font-weight: 400; text-align: left; }
td, th { padding: 0; }
svg { display: block; flex: none; }
.defs { position: absolute; width: 0; height: 0; }

/* Board with one framed window per step */
.board { position: relative; width: 100%; aspect-ratio: 4096 / 2238; overflow: hidden; background: #3f8e9d; border-top: 1px solid #5d7880; }
.flow { width: 100%; margin-top: -1px; }
.shot { position: absolute; overflow: hidden; background: #ebeff2; }
.shot-rules { left: 19.9%; top: 11.75%; width: 27.73%; height: 32.8%; }
.shot-tx { left: 53.88%; top: 11.5%; width: 27.7%; height: 33.02%; display: flex; border: 1px solid #dfd9dd; border-width: 1px 3px 1px 0; }
.shot-exposure { left: 3.9%; top: 52.95%; width: 27.73%; height: 32.8%; }
.shot-scan { left: 37.79%; top: 52.95%; width: 24.54%; height: 32.8%; }
.shot-graph { left: 68.53%; top: 52.63%; width: 25.05%; height: 33.11%; }

/* Risk rings */
.ring { display: inline-flex; align-items: center; justify-content: center; flex: none; border-radius: 50%; border: 1px solid; background: #fff; color: #2b3338; }
.ring.yellow { border-color: #f5cd47; }
.ring.grey { border-color: #b4bbc1; }
.ring.sky { border-color: #8fc8f0; }
.ring.red { border-color: #ab4228; }
.ring.small { width: 16px; height: 16px; font-size: 7px; }
.ring.mid { width: 19px; height: 19px; font-size: 7px; }
.ring.big { width: 31px; height: 31px; border-width: 2px; font-size: 10px; }
.ring.huge { width: 38px; height: 38px; border-width: 2px; font-size: 13px; background: none; }

/* Wallet pages */
.wallet { --accent: #38868f; font-size: 8px; }
.wallet.teal { --accent: #07858f; }
.w-nav { display: flex; height: 33px; padding-left: 17px; padding-right: 26px; background: #fff; box-shadow: 0 1px 2px #dfe2e4; }
.w-logo { width: 13px; height: 16px; margin: 8px 14px 0 0; }
.w-navlink { padding: 0 10px; line-height: 32px; border-bottom: 2px solid var(--accent); color: var(--accent); }
.w-user { display: flex; align-items: center; gap: 6px; margin-left: auto; font-size: 8px; }
.w-user svg { width: 9px; height: 9px; }
.w-title { display: grid; grid-template-columns: 1fr auto 1fr; align-items: center; padding: 17px 15px 0 19px; }
.w-title h1 { display: flex; align-items: center; gap: 6px; font-size: 15px; line-height: 20px; }
.w-title h1 svg { width: 9px; height: 10px; color: #4497a2; }
.w-back { display: flex; align-items: center; gap: 4px; color: var(--accent); }
.w-back svg { width: 7px; height: 7px; color: #2b3338; }
.w-pager { justify-self: end; }
.w-pager a { color: #4497a2; }
.w-risk { display: flex; justify-content: center; align-items: center; gap: 6px; }
.w-risk .ring { background: none; }
.w-btn { width: 75px; height: 17px; color: #fff; font-weight: 700; font-size: 8px; background: linear-gradient(#4290a0, #38818a); box-shadow: 0 1px 1px #c4d0d6; }
.w-body { width: 71%; margin: 9px auto 0; min-width: 811px; }
.w-banner { display: flex; min-height: 50px; background: #e1f0fe; box-shadow: 0 -1px 1px #e3e7e9; }
.w-info { display: flex; align-items: center; justify-content: center; width: 28px; background: #29b6f6; }
.w-info svg { width: 15px; height: 15px; }
.w-banner p { flex: 1; padding: 6px 28px 4px 10px; font-size: 13px; line-height: 20px; }
.w-cards { display: grid; grid-template-columns: repeat(3, 1fr); gap: 5px; margin-top: 15px; }
.w-cards dl { display: grid; grid-template-columns: 100px 1fr; line-height: 12px; padding: 10px 10px 9px; background: #fff; border-radius: 2px; box-shadow: 0 1px 2px #e0e4e6; }
.w-cards dd { display: flex; align-items: center; gap: 3px; }
.coin { width: 9px; height: 9px; border-radius: 50%; border: 3px solid #4caf50; background: #a5d6a7; }
.w-tabs { display: flex; justify-content: center; margin-top: 7px; font-size: 10px; }
.w-tabs a { padding: 0 10px; line-height: 18px; height: 24px; border-bottom: 3px solid transparent; }
.w-tabs .on { color: var(--accent); border-color: var(--accent); }
.w-funds, .w-expos { display: grid; grid-template-columns: 1fr 1fr; gap: 5px; margin-top: 7px; }
.w-fund, .w-expo { background: #fff; box-shadow: 0 0 3px #dfe3e5; border-radius: 2px; }
.w-fund { display: flex; gap: 9px; height: 53px; padding: 8px 10px; font-size: 10px; }
.w-fund.on { border-bottom: 2px solid #4195a6; }
.w-fund .ring { font-size: 8px; }
.w-fund h2 { font-size: 10px; line-height: 18px; }
.w-fund h2 a, .w-expo h2 a { color: var(--accent); text-decoration: underline; }
.w-fund p { font-size: 8px; line-height: 10px; }
.w-fund .ring.grey { margin-left: auto; }
.w-sec { margin-top: 2px; }
.w-funds + .w-sec { margin-top: 9px; }
.w-sechead, .w-row { display: grid; grid-template-columns: 1fr 60px 163px 90px; align-items: center; text-align: right; height: 30px; background: #fff; font-size: 10px; box-shadow: 0 0 2px #dcdfe1; }
.w-sechead h3 { display: flex; align-items: center; gap: 3px; padding-left: 11px; font-size: 10px; }
.w-sechead h3 svg { width: 8px; height: 8px; margin-right: 3px; }
small { font-size: 7px; }
.pct { display: flex; align-items: center; justify-content: flex-end; gap: 3px; }
.w-secbody { margin: 0 5px; padding: 10px 12px 10px 8px; background: #fff; box-shadow: 0 1px 2px #e0e3e5; }
.w-table { border-bottom: 1px solid #e6e9eb; table-layout: fixed; }
.w-table th { height: 18px; padding: 0 6px; background: #ebeff2; border-left: 1px solid #fff; }
.w-table th:first-child { border: 0; }
.w-table td { height: 18px; padding: 0 5px 0 7px; border-bottom: 1px solid #f5f6f7; }
.w-table td:nth-child(2) { padding-left: 3px; }
.w-table th:nth-child(1) { width: 157px; }
.w-table th:nth-child(2) { width: 312px; }
.w-table th:nth-child(3) { width: 82px; }
.w-table th:nth-child(n+3), .w-table td:nth-child(n+3) { text-align: right; }
.tag { display: inline-block; padding: 0 6px; line-height: 15px; border-radius: 1px; color: #fff; font-size: 8px; }
.tag.green { background: #66bb6a; }
.tag.blue { background: #4b72ba; }
.tag.mint { background: #63bb96; }
.w-expo { padding: 10px 10px 4px; }
.w-expo.on { border-bottom: 3px solid #0899a5; }
.w-expo h2 { font-size: 10px; line-height: 18px; }
.bar { display: flex; gap: 1px; height: 21px; margin: 4px 3px 6px; border: solid #e4ebf2; border-width: 1px 0; }
.bar i { flex-basis: 0; }
.legend { display: grid; grid-template-columns: 1fr 1fr; }
.legend li { position: relative; height: 28px; padding-left: 16px; line-height: 12px; }
.legend li::before { content: ""; position: absolute; left: 0; top: 0; width: 10px; height: 10px; background: var(--c); }
.w-rows { display: grid; gap: 3px; margin-top: 7px; }
.w-row { grid-template-columns: 1fr 60px 197px; padding-right: 10px; font-size: 9px; }
.w-row h3 { display: flex; align-items: center; gap: 4px; padding-left: 11px; font-size: 9px; }
.w-row h3 svg { width: 8px; height: 8px; }

/* Transaction page */
.shot-tx { font-size: 9px; background: #ebedf0; }
.t-side { position: relative; z-index: 3; display: flex; flex-direction: column; width: 49px; flex: none; background: #44727f; }
.t-side a { display: flex; align-items: center; justify-content: center; height: 37px; color: #b5cbd1; border-bottom: 1px solid transparent; }
.t-side .on { background: #4f7f94; }
.t-side .rule { border-top: 1px solid #54808c; border-bottom-color: #54808c; }
.t-side a svg { width: 16px; height: 16px; fill: none; stroke: currentColor; stroke-width: 1; }
.t-side .t-logo { height: 35px; }
.t-side .t-logo svg { width: 12px; height: 12px; stroke: none; }
.t-side .t-out { margin-top: auto; height: 39px; border-bottom: 0; }
.t-toggle { position: absolute; right: -9px; top: 50%; width: 13px; height: 48px; border-radius: 0 3px 3px 0; background: #44727f; color: #fff; }
.t-toggle svg { width: 11px; height: 11px; }
.t-page { flex: 1; display: flex; flex-direction: column; min-width: 0; }
.t-nav { display: flex; flex: none; height: 39px; padding-left: 17px; background: #fff; font-size: 9px; font-weight: 500; }
.t-nav a { padding: 0 13px; line-height: 36px; border-bottom: 3px solid transparent; }
.t-nav .on { color: #43808f; border-color: #43808f; }
.t-cols { flex: 1; display: flex; min-height: 0; }
.t-list { width: 146px; flex: none; overflow: hidden; margin: 17px 0 0 17px; padding-left: 12px; background: #fff; border-radius: 4px 0 0 0; box-shadow: 0 0 4px #d9dcdf; }
.t-filter { display: flex; align-items: center; gap: 5px; height: 46px; color: #43808f; font-size: 10px; }
.t-filter svg { width: 10px; height: 10px; }
.t-list th { height: 19px; background: #eeeff1; font-size: 9px; font-weight: 700; }
.t-list td { height: 42px; border-bottom: 1px solid #eceef0; font-weight: 500; }
.t-list th:nth-child(1) { width: 25px; }
.t-list th:nth-child(2) { width: 65px; }
.t-list th:nth-child(3) { border-left: 1px solid #fff; padding-left: 6px; }
.t-list td:nth-child(3) { padding-left: 15px; }
.t-list td:nth-child(1), .t-list th:nth-child(1) { padding-left: 5px; }
.t-list .on td { background: #e5f2f6; }
.t-list .ring { display: flex; }
.warn { width: 10px; height: 10px; margin-left: 4px; }
.shot-tx input { display: block; appearance: none; width: 10px; height: 10px; border: 1px solid #7a8084; border-radius: 1px; background: #fff; }
.shot-tx input:checked { background: #3f63e0; border-color: #3f63e0; }
.shot-tx input:disabled { background: #cfd1d3; border-color: #cfd1d3; }
.shot-tx input:checked::after { content: ""; display: block; width: 6px; height: 3px; margin: 2px 1px; border: solid #fff; border-width: 0 0 1px 1px; transform: rotate(-45deg); }
.t-main { flex: 1; min-width: 0; display: flex; flex-direction: column; padding: 21px 18px 0; box-shadow: -2px 0 4px #dde0e3; background: #ebedf0; border-right: 1px solid #d6d9dc; }
.t-main a { color: #43808f; text-decoration: underline; }
.t-title { display: grid; grid-template-columns: 1fr auto 1fr; align-items: center; }
.t-title h1 { display: flex; align-items: center; gap: 8px; font-size: 17px; line-height: 20px; }
.t-title h1 svg { width: 10px; height: 10px; color: #5c9aa8; }
.t-crumbs { display: flex; align-items: center; gap: 10px; }
.t-crumbs svg { width: 8px; height: 8px; margin: 0 -1px 0 2px; }
.t-pager { display: flex; gap: 7px; justify-self: end; }
.t-risk { display: flex; align-items: center; justify-content: center; gap: 6px; margin-top: 3px; }
.t-select { position: relative; width: 152px; height: 22px; background: #44727f; border-radius: 2px; box-shadow: 0 1px 2px #aab6bc; color: #fff; font-size: 10px; font-weight: 700; }
.t-select select { appearance: none; width: 100%; height: 22px; padding: 0 12px; font-size: 10px; }
.t-select::after { content: ""; position: absolute; right: 18px; top: 9px; border: 4px solid transparent; border-top-color: #fff; border-bottom: 0; }
.t-risk button { width: 91px; height: 22px; background: linear-gradient(#5090a2, #447886); color: #fff; font-weight: 700; border-radius: 1px; }
.t-cards { display: grid; grid-template-columns: repeat(3, 1fr); gap: 6px; margin-top: 8px; }
.t-cards dl { display: grid; grid-template-columns: 107px 1fr; align-content: start; height: 93px; padding: 12px 13px; line-height: 14px; background: #fff; border-radius: 2px; }
.t-cards .two, .bat { line-height: 14px; align-self: center; }
.bat { display: flex; align-items: center; gap: 3px; }
.bat svg { width: 11px; height: 11px; }
.t-main .t-tabs { display: flex; justify-content: center; margin-top: 9px; font-size: 12px; font-weight: 500; }
.t-main .t-tabs a { padding: 0 12px; height: 27px; line-height: 20px; border-bottom: 3px solid transparent; color: #2b3338; text-decoration: none; }
.t-main .t-tabs .on { color: #43808f; border-color: #43808f; }
.t-sechead { display: grid; grid-template-columns: 1fr 80px 173px 182px; align-items: center; text-align: right; height: 30px; margin: 9px -3px 0; padding: 0; background: #fff; font-size: 12px; font-weight: 500; box-shadow: 0 0 3px #d9dcdf; border-radius: 2px; }
.t-sechead > :last-child { padding-right: 12px; }
.t-sechead h2 { display: flex; align-items: center; gap: 3px; padding-left: 14px; font-size: 12px; font-weight: 500; }
.t-sechead h2 svg { width: 9px; height: 9px; margin-right: 5px; }
.t-sechead small { font-size: 9px; }
.t-secbody { flex: 1; min-height: 0; display: flex; flex-direction: column; margin: 0 3px; padding: 13px 12px 0; background: #fff; }
.t-secbody table { table-layout: fixed; flex: none; }
.t-secbody th { height: 21px; padding: 0 7px 0 6px; background: #ebedf0; border-left: 1px solid #fff; }
.t-secbody th:nth-child(1) { width: 170px; border: 0; }
.t-secbody th:nth-child(3) { width: 86px; }
.t-secbody th:nth-child(4), .t-secbody th:nth-child(5) { width: 171px; }
.t-secbody td { height: 21px; padding: 0 4px 0 6px; }
.t-secbody td:nth-child(n+3), .t-secbody th:nth-child(n+3) { text-align: right; }
.t-ent { display: inline-block; width: 108px; }
.t-tag { display: inline-block; padding: 0 7px; line-height: 18px; background: #4a62b3; color: #fff; border-radius: 1px; vertical-align: middle; }
.t-graph { flex: 1; position: relative; min-height: 0; background: #f1f2f4; }
.t-graph > svg { width: 100%; }
.t-gtext { font: 14px "Liberation Sans", Arial, sans-serif; fill: #4b5054; }
.t-dock { position: absolute; left: 19px; right: 19px; bottom: 9px; display: flex; gap: 7px; line-height: 14px; }
.t-dock > div, .t-dock > dl { height: 51px; padding: 12px; background: #fff; box-shadow: 0 0 4px #dfe1e4; }
.t-dock dl { flex: 1; display: grid; grid-template-columns: 144px 1fr; align-content: start; }
.t-dock dd a { margin-left: 5px; }
.t-dock label { display: flex; align-items: center; gap: 6px; }
.t-grip { position: absolute; left: 47%; top: -12px; width: 41px; height: 3px; background: #b2b7bc; }
.t-fab { position: absolute; right: 12px; bottom: 16px; z-index: 4; width: 46px; height: 46px; border-radius: 50%; background: #5c2060; box-shadow: 0 2px 8px #b9b4bd; }
.t-fab svg { width: 26px; height: 26px; margin: 0 auto; }

/* Etherscan page */
.shot-scan { font: 9px/14px Inter, "Liberation Sans", sans-serif; color: #16191d; background: linear-gradient(#f9fafd 80%, #fff); border-top: 1px solid #c3dde5; }
.shot-scan a { color: #0784c3; }
.s-head { background: #fff; border-bottom: 1px solid #e6e9ec; padding: 4px 31px 0 60px; }
.s-top { display: flex; align-items: center; height: 25px; font-size: 8px; color: #6c757d; }
.s-gas { display: flex; align-items: center; gap: 3px; margin-left: 9px; }
.s-gas svg { width: 8px; height: 8px; }
.s-top b { font-weight: 400; color: #00a186; }
.s-search { display: flex; align-items: center; gap: 6px; width: 396px; height: 25px; margin-left: auto; padding-left: 9px; border-radius: 4px; background: #f8f9fa; font-size: 9px; }
.s-search svg { width: 11px; height: 11px; }
.s-search input { flex: 1; }
.s-search input::placeholder { color: #6c757d; opacity: 1; }
.s-sq { width: 26px; height: 24px; margin-left: 5px; border-right: 1px solid #eceef0; }
.s-sq svg { width: 9px; height: 9px; margin: 0 auto; }
.sun { color: #0784c3; }
.s-bar { display: flex; align-items: center; justify-content: space-between; height: 44px; }
.shot-scan .s-brand { display: flex; align-items: center; gap: 5px; font-size: 15px; font-weight: 500; color: #21325b; }
.s-brand svg { width: 22px; height: 23px; }
.s-bar nav { display: flex; align-items: center; gap: 16px; padding-right: 7px; font-weight: 500; }
.s-bar nav a { display: flex; align-items: center; gap: 4px; color: #16191d; }
.s-bar nav svg { width: 7px; height: 7px; }
.s-sep { width: 1px; height: 10px; margin-right: -8px; background: #adb5bd; }
.s-bar nav .s-sign svg { width: 10px; height: 10px; }
.s-page { padding: 12px 31px 0 60px; }
.s-addr { display: flex; align-items: center; height: 20px; }
.s-ident { width: 16px; height: 16px; }
.s-addr h1 { margin: 0 6px 0 5px; font-size: 12px; font-weight: 500; }
.s-hash { font-size: 9px; font-weight: 500; }
.s-acts { display: flex; gap: 11px; margin-left: 15px; color: #adb5bd; }
.s-acts svg { width: 10px; height: 9px; }
.s-btns { display: flex; gap: 5px; margin-left: auto; }
.s-btns button { display: flex; align-items: center; gap: 4px; height: 19px; padding: 0 6px; border-radius: 3px; background: #0784c3; color: #fff; font-size: 8px; font-weight: 500; }
.s-btns svg, .s-more svg { width: 6px; height: 6px; }
.s-more { display: flex; justify-content: flex-end; gap: 5px; margin-top: 39px; font-size: 8px; font-weight: 500; }
.s-more button { display: flex; align-items: center; justify-content: center; gap: 5px; min-width: 22px; height: 16px; padding: 0 6px; background: #fff; border-radius: 3px; }
.s-more .s-star { width: 9px; height: 9px; }
.s-cards { display: grid; grid-template-columns: repeat(3, 1fr); gap: 9px; margin-top: 8px; }
.s-card { height: 166px; padding: 9px 10px; background: #fff; border-radius: 6px; box-shadow: 0 2px 6px #eaecf1; }
.s-card h2 { font-size: 9px; font-weight: 600; line-height: 16px; }
.s-card h3 { margin-top: 10px; font-size: 7px; color: #6c757d; line-height: 12px; }
.s-card h2 + h3 { margin-top: 9px; }
.s-card p { line-height: 18px; font-size: 9px; }
.s-card em { font-style: normal; color: #6c757d; }
.s-card p button { display: inline-flex; align-items: center; gap: 5px; height: 15px; padding: 0 5px; margin-left: 3px; border: 1px solid #e9ecef; border-radius: 3px; font-size: 7px; }
.s-card p button svg { width: 6px; height: 6px; }
.s-card .s-taglist { line-height: 21px; }
.s-card .s-taglist button { margin: 0; padding: 0 12px; border-radius: 8px; border-style: dashed; }
.s-hold { display: flex; gap: 7px; height: 27px; }
.s-hold span { position: relative; flex: 1; }
.s-hold select { appearance: none; width: 100%; height: 27px; padding: 0 7px; border: 1px solid #e9ecef; border-radius: 4px; font-size: 8px; }
.s-hold span svg { position: absolute; right: 6px; top: 10px; width: 8px; height: 8px; }
.s-hold button { width: 27px; border-radius: 4px; background: #e9ecef; }
.s-hold button svg { width: 10px; height: 10px; margin: 0 auto; }
.s-tabs { display: flex; gap: 5px; margin-top: 22px; font-size: 8px; font-weight: 600; }
.s-tabs a { padding: 0 6px; line-height: 19px; border-radius: 4px; background: #e9ecef; color: #081d35; }
.s-tabs .on { background: #0784c3; color: #fff; }
.s-list { margin-top: 7px; background: #fff; border-radius: 6px; box-shadow: 0 2px 6px #eaecf1; }
.s-listhead { display: flex; align-items: center; justify-content: space-between; height: 42px; padding: 0 10px; font-size: 9px; }
.s-listhead p { display: flex; align-items: center; gap: 3px; }
.s-listhead .s-sort { width: 9px; height: 8px; }
.s-listhead span { display: flex; gap: 5px; }
.s-listhead button { display: flex; align-items: center; gap: 4px; height: 18px; padding: 0 6px; border: 1px solid #f0f2f4; border-radius: 3px; font-size: 8px; font-weight: 500; }
.s-listhead svg { width: 7px; height: 7px; }
.s-list table { table-layout: fixed; font-size: 9px; white-space: nowrap; }
.s-list th { height: 24px; font-weight: 600; font-size: 7px; }
.s-list td { height: 32px; border-bottom: 1px solid #eceff2; }
.s-list tr:last-child td, .s-list tr:first-child td { border-bottom-color: transparent; }
.s-list td svg, .s-list th svg { display: inline-block; width: 9px; height: 8px; margin-left: 3px; color: #868e96; vertical-align: middle; }
.s-list th:first-child, .s-list td:first-child { text-align: center; }
.s-list td:first-child svg { margin: 0; color: #333; }
.s-list td button { width: 15px; height: 15px; border: 1px solid #eceff2; border-radius: 3px; line-height: 10px; }
.s-list td:last-child { color: #6c757d; font-size: 8px; }
.s-pill { display: inline-block; width: 53px; line-height: 15px; border: 1px solid #e4e7ea; border-radius: 3px; background: #fafbfc; font-size: 7px; text-align: center; vertical-align: middle; }
.out, .in { display: inline-block; width: 26px; line-height: 14px; border: 1px solid #c9ebe4; border-radius: 3px; background: #e5f6f3; color: #00a186; font-size: 6px; text-align: center; vertical-align: middle; }
.s-list .out { background: #fdf3d7; border-color: #fbe7ae; color: #cc9a06; }
.s-down { margin-top: 7px; text-align: right; font-size: 7px; color: #6c757d; }
.s-note { display: flex; gap: 4px; align-items: center; margin-top: 9px; font-size: 8px; color: #6c757d; white-space: pre; }
.s-note svg { width: 8px; height: 8px; }
.s-foot { display: flex; gap: 7px; height: 74px; margin-top: 41px; padding: 16px 31px 0 60px; background: #f8f9fb; }
.s-soc { display: flex; align-items: center; justify-content: center; width: 20px; height: 20px; border-radius: 50%; background: #e9ecef; }
.s-soc svg { width: 10px; height: 10px; fill: #081d35; }
.shot-scan .s-totop { margin-left: auto; line-height: 20px; font-weight: 500; color: #16191d; }
.s-cookie { position: absolute; left: 193px; right: 166px; bottom: 11px; display: flex; align-items: center; justify-content: space-between; gap: 4px; height: 37px; padding: 0 7px; background: #fff; border: 1px solid #f0f1f4; border-radius: 4px; font-size: 9px; box-shadow: 0 0 4px #eceef2; }
.s-cookie svg { width: 9px; height: 9px; }
.s-cookie p { flex: 1; white-space: nowrap; }
.s-cookie button { width: 48px; height: 21px; border-radius: 3px; background: #0784c3; color: #fff; font-size: 8px; }

/* Investigator canvas */
.shot-graph { font-size: 6px; color: #3d464b; background: #edf1f4; background-image: linear-gradient(90deg, #e8ecef 1px, transparent 1px), linear-gradient(#e8ecef 1px, transparent 1px); background-size: 50px 50px; background-position: 18px 24px; }
.g-lines { position: absolute; inset: 0; width: 100%; height: 100%; }
.g-top { position: relative; display: flex; gap: 5px; padding: 15px 9px 0 19px; }
.g-box { display: flex; align-items: center; height: 21px; padding: 0 5px; background: #fff; box-shadow: 0 1px 2px #d8dcdf; }
.g-name { width: 134px; font-size: 8px; color: #159aa5; }
.g-name svg { width: 9px; height: 11px; margin-right: 8px; color: #111; }
.g-name button { margin-left: auto; font-size: 6px; }
.g-mode { width: 43px; gap: 4px; }
.g-mode svg { width: 9px; height: 7px; }
.g-search { flex: 1; padding-left: 7px; }
.g-search svg { width: 10px; height: 10px; margin-right: 11px; color: #111; }
.g-search input { flex: 1; font-size: 7px; }
.g-search input::placeholder { color: #a9b0b4; opacity: 1; }
.g-net { position: absolute; left: 107px; top: 107px; width: 260px; height: 40px; }
.g-net text { font-size: 5px; fill: #222; }
.g-net .dim { fill: #777; }
.g-tip { position: absolute; left: 179px; top: 130px; width: 77px; padding: 3px 5px 8px; background: #fff; box-shadow: 0 0 3px #d8dcdf; }
.g-tip h2 { font-size: 7px; line-height: 14px; padding-bottom: 3px; }
.g-tip li { line-height: 14px; }
.g-tip li, .g-assets li { display: flex; align-items: center; gap: 2px; }
.g-tip li::before, .g-assets li::before { content: ""; width: 7px; height: 7px; border-radius: 50%; background: radial-gradient(circle, #fff 1px, var(--c) 2px); }
.g-side { position: absolute; right: 43px; top: 74px; display: flex; height: 464px; box-shadow: 0 0 2px #dadee1; }
.g-rail { position: relative; display: flex; flex-direction: column; align-items: center; gap: 8px; width: 24px; padding-top: 5px; background: #fafafa; border-right: 1px solid #edeff0; }
.g-rail svg { width: 11px; height: 11px; fill: none; stroke: #159aa5; }
.g-rail .dim { stroke: #cfdcde; }
.g-rail button { width: 25px; height: 20px; margin-top: -2px; margin-bottom: -2px; background: #4297a5; }
.g-rail button svg { stroke: #fff; margin: 0 auto; }
.g-rail .g-hatch { margin: auto auto 4px 2px; width: 14px; height: 13px; }
.g-panel { position: relative; width: 364px; padding: 14px 14px 0; background: #fff; }
.g-x { position: absolute; right: 9px; top: 9px; }
.g-x svg { width: 6px; height: 6px; }
.g-panel h2 { font-size: 9px; line-height: 14px; }
.g-pair { display: grid; grid-template-columns: 1fr 22px 1fr; gap: 8px; margin-top: 5px; }
.g-card { height: 57px; padding: 6px 7px 0; background: #f6f6f7; border: 1px solid #f4dff7; border-left: 1px solid #dcb4e4; }
.g-card + .g-dir + .g-card { border-left-color: #f4dff7; border-right-color: #dcb4e4; }
.g-card small { display: block; font-size: 6px; line-height: 10px; }
.g-card p { display: flex; align-items: center; gap: 5px; line-height: 13px; }
.g-card b { font-size: 9px; font-weight: 500; }
.g-card span { padding: 0 5px; font-size: 5px; line-height: 10px; background: #b5c3cf; color: #fff; }
.g-card .amt { gap: 4px; line-height: 20px; font-weight: 700; }
.amt i { font-weight: 400; font-style: normal; color: #a5abae; }
.amt svg { width: 14px; height: 6px; fill: none; stroke: #b5c3cf; }
.g-dir { display: flex; flex-direction: column; justify-content: space-between; }
.g-dir button { height: 15px; background: #d6eef0; color: #159aa5; font-size: 8px; line-height: 15px; }
.g-dir .on { background: #159aa5; color: #fff; }
.g-between { margin-top: 5px; font-size: 8px; line-height: 14px; color: #8a9195; }
.g-between b { font-weight: 700; color: #3d464b; }
.g-line { display: flex; align-items: center; justify-content: space-between; line-height: 12px; margin-top: 5px; }
.g-line h3 { font-size: 7px; }
.g-line a, .g-panel td a, .g-panel .t { color: #159aa5; }
.g-line a, .g-line span { display: flex; align-items: center; gap: 3px; }
.g-line svg { width: 6px; height: 6px; }
.g-assets { display: flex; gap: 4px; line-height: 12px; }
.g-assets li { gap: 3px; padding-right: 2px; }
.g-cust { margin-top: 10px; padding-bottom: 1px; }
.g-panel table { border: 1px solid #f0f2f3; table-layout: fixed; }
.g-panel th { height: 20px; font-size: 7px; }
.g-panel th i { font-style: normal; color: #aab; }
.g-panel th:nth-child(1) { width: 107px; }
.g-panel th:nth-child(2) { width: 65px; }
.g-panel th:nth-child(3) { width: 65px; }
.g-panel th:first-child, .g-panel td:first-child { padding-left: 4px; }
.g-panel td { height: 16px; border-bottom: 1px solid #f7f8f8; }
.g-panel td svg { display: inline-block; width: 8px; height: 8px; color: #2f97a0; vertical-align: middle; }
.g-panel td b { font-weight: 700; }
.g-tools { position: absolute; left: 19px; bottom: 12px; display: flex; gap: 5px; }
.g-tools .g-box { gap: 8px; }
.g-tools svg { width: 12px; height: 11px; fill: none; stroke: #111; stroke-width: 1.2; }
.g-tools i { width: 1px; height: 10px; background: #ddd; }
.g-tools .dim { stroke: #b9bec1; }
.g-tools .tl { stroke: #159aa5; }
.g-tools .pie { stroke: none; }
```
